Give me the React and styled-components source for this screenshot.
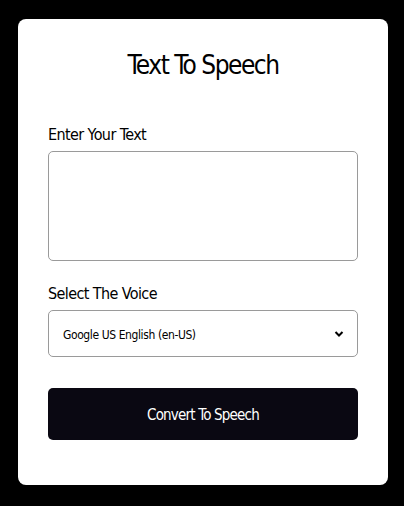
import styled, { createGlobalStyle } from "styled-components";

const Global = createGlobalStyle`
  html, body { margin: 0; padding: 0; background: #000; }
  body { font-family: "DejaVu Sans Condensed", "Liberation Sans", sans-serif; }
  * { box-sizing: border-box; }
`;

const Page = styled.div`
  padding: 19px 16px 21px 18px;
`;

const Card = styled.div`
  width: 370px;
  background: #fff;
  border-radius: 8px;
  padding: 26px 30px 45px;
  display: flex;
  flex-direction: column;
`;

const Title = styled.h1`
  margin: 0;
  font-size: 26px;
  line-height: 41px;
  letter-spacing: -1.5px;
  font-weight: 400;
  text-align: center;
  color: #000;
`;

const Field = styled.div`
  display: flex;
  flex-direction: column;
  gap: 4px;
  margin-top: ${(p) => p.$top}px;
`;

const Label = styled.label`
  font-size: 16px;
  line-height: 24px;
  letter-spacing: -0.6px;
  color: #000;
`;

const TextArea = styled.textarea`
  height: 110px;
  width: 100%;
  resize: none;
  border: 1px solid #9a9a9a;
  border-radius: 5px;
  outline: none;
  font-family: inherit;
  font-size: 14px;
  padding: 10px 14px;
`;

const SelectWrap = styled.div`
  position: relative;
`;

const Select = styled.select`
  width: 100%;
  height: 47px;
  appearance: none;
  border: 1px solid #9a9a9a;
  border-radius: 5px;
  background: #fff;
  padding: 2px 40px 0 14px;
  font-family: inherit;
  font-size: 12px;
  letter-spacing: -0.4px;
  color: #000;
  outline: none;
`;

const Chevron = styled.svg`
  position: absolute;
  right: 14px;
  top: 50%;
  transform: translateY(-50%);
  pointer-events: none;
`;

const Button = styled.button`
  margin-top: 31px;
  height: 52px;
  width: 100%;
  border: none;
  border-radius: 5px;
  background: #0a0812;
  color: #fff;
  font-family: inherit;
  font-size: 15px;
  letter-spacing: -0.8px;
  padding-top: 3px;
  cursor: pointer;
`;

export default function App() {
  return (
    <Page>
      <Global />
      <Card>
        <Title>Text To Speech</Title>
        <Field $top={37}>
          <Label>Enter Your Text</Label>
          <TextArea />
        </Field>
        <Field $top={21}>
          <Label>Select The Voice</Label>
          <SelectWrap>
            <Select defaultValue="en-US">
              <option value="en-US">Google US English (en-US)</option>
            </Select>
            <Chevron width="10" height="8" viewBox="0 0 10 8">
              <path d="M1.5 2 L5 5.5 L8.5 2" fill="none" stroke="#000" strokeWidth="2" />
            </Chevron>
          </SelectWrap>
        </Field>
        <Button>Convert To Speech</Button>
      </Card>
    </Page>
  );
}
